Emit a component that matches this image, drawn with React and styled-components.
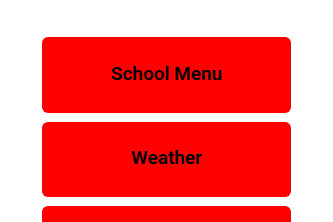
import React from "react";
import styled, { createGlobalStyle } from "styled-components";

const Global = createGlobalStyle`
  html, body { margin: 0; padding: 0; background: #ffffff; }
  body { font-family: Roboto, "Noto Sans", sans-serif; }
`;

const Page = styled.div`
  display: flex;
  flex-direction: column;
  gap: 9px;
  padding: 37px 42px 0;
  height: 222px;
  box-sizing: border-box;
  overflow: hidden;
`;

const MenuButton = styled.button`
  flex: 0 0 75.5px;
  display: flex;
  align-items: center;
  justify-content: center;
  border: none;
  border-radius: 6px;
  background: #ff0000;
  color: #000000;
  font-family: Roboto, sans-serif;
  font-size: 19px;
  font-weight: 600;
  line-height: 1;
  padding: 0 0 3px;
  cursor: pointer;
`;

const items = ["School Menu", "Weather", ""];

export default function App() {
  return (
    <>
      <Global />
      <Page>
        {items.map((t, i) => (
          <MenuButton key={i}>{t}</MenuButton>
        ))}
      </Page>
    </>
  );
}
